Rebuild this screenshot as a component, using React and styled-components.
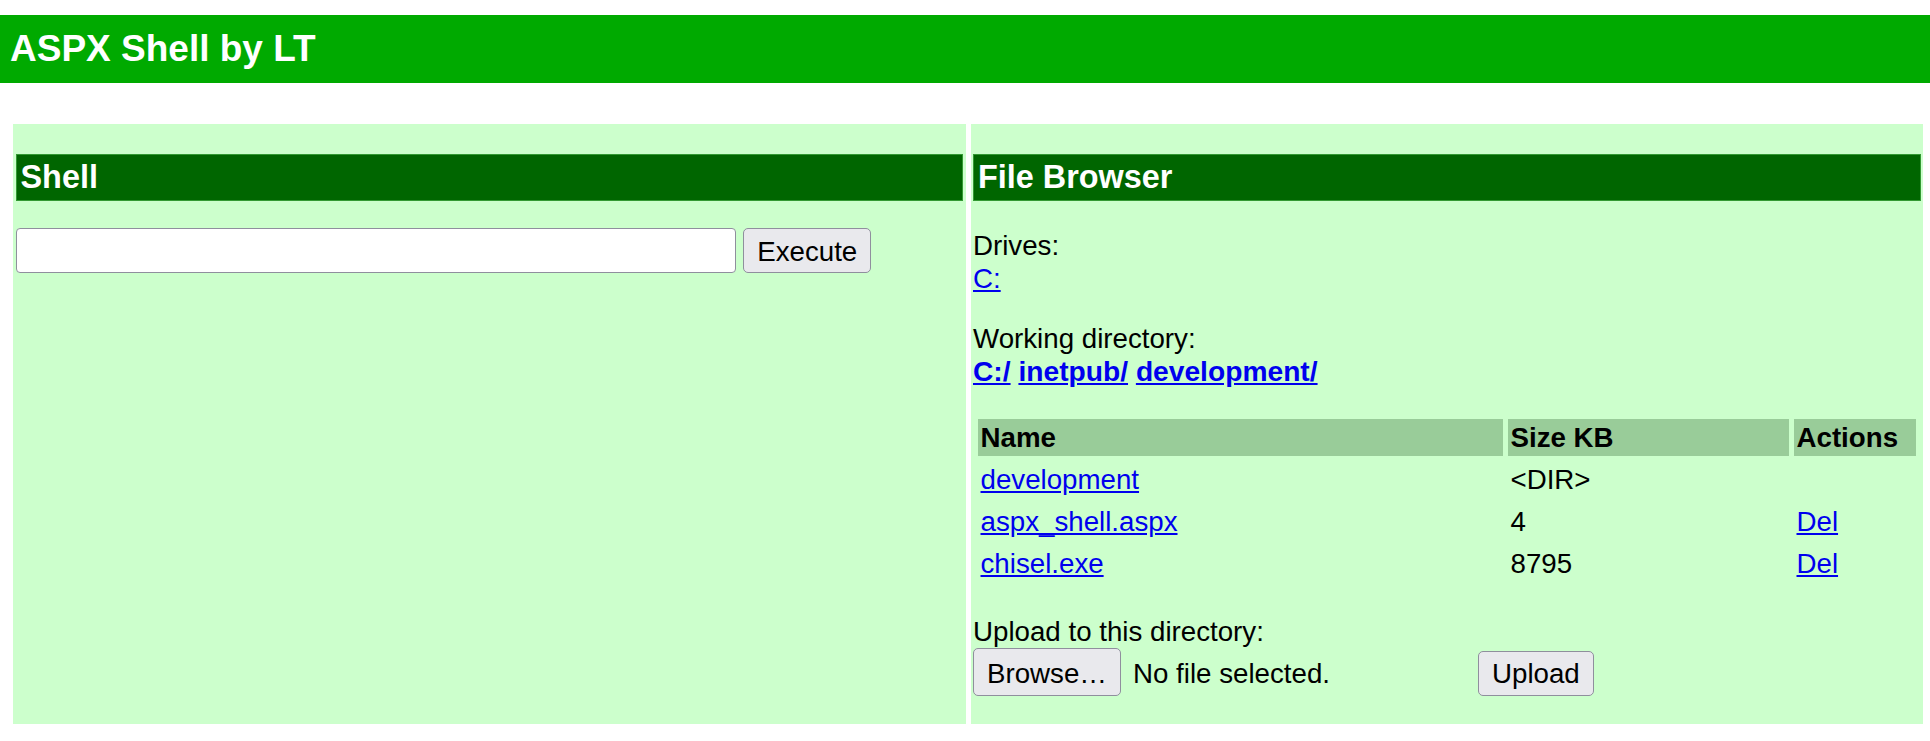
import React from "react";
import styled, { createGlobalStyle } from "styled-components";

const Global = createGlobalStyle`
  body {
    margin: 0;
    background: #ffffff;
    color: #000000;
    font-family: "Liberation Sans", Arial, sans-serif;
    font-size: 27.7px;
    line-height: 33px;
  }
`;

const TitleBar = styled.h1`
  margin: 15px 0 0;
  padding: 13px 10px 12px;
  background: #00aa00;
  color: #ffffff;
  font-size: 37px;
  line-height: 42.5px;
  font-weight: bold;
`;

const Columns = styled.div`
  display: grid;
  grid-template-columns: 1fr 1fr;
  column-gap: 5px;
  margin: 41px 7px 0 13px;
`;

const Panel = styled.div`
  background: #ccffcc;
  padding: 30px 2.5px 0;
`;

const SectionHead = styled.div`
  background: #006600;
  border: 1px solid #339933;
  padding: 4px;
  color: #ffffff;
  font-size: 32.4px;
  line-height: 37px;
  font-weight: bold;
`;

const CommandRow = styled.form`
  display: flex;
  gap: 7.7px;
  margin: 27px 0 0;
`;

const CommandInput = styled.input`
  box-sizing: border-box;
  width: 720px;
  height: 45px;
  background: #ffffff;
  border: 1px solid #8f8f9d;
  border-radius: 4px;
  font: inherit;
  padding: 0 6px;
`;

const Button = styled.button`
  box-sizing: border-box;
  height: ${(p) => p.$h}px;
  padding: ${(p) => p.$pt}px 13px ${(p) => p.$h - p.$pt - 35}px;
  background: #e9e9ed;
  border: 1px solid #8f8f9d;
  border-radius: 5px;
  color: #000000;
  font-family: inherit;
  font-size: 27.7px;
  line-height: 33px;
  cursor: pointer;
`;

const Block = styled.p`
  margin: ${(p) => p.$top}px 0 0;
`;

const Link = styled.a`
  color: #0000ee;
  text-decoration: underline;
  font-weight: ${(p) => (p.$bold ? "bold" : "normal")};
`;

const PathLine = styled.span`
  font-weight: bold;
  font-size: 28.2px;
`;

const FileTable = styled.table`
  width: 100%;
  table-layout: fixed;
  border-spacing: 5px;
  margin-top: 26px;
  font-size: 27.7px;
`;

const Th = styled.th`
  width: ${(p) => p.$w || "auto"};
  background: #99cc99;
  text-align: left;
  padding: 2px 2.5px;
  line-height: 33px;
  font-weight: bold;
`;

const Td = styled.td`
  padding: 2px 2.5px;
  line-height: 33px;
  white-space: nowrap;
`;

const UploadRow = styled.div`
  display: flex;
  align-items: baseline;
  margin-bottom: 28px;
`;

const FilePicker = styled.div`
  display: flex;
  align-items: baseline;
  gap: 12px;
  width: 497px;
`;

const FileName = styled.span`
  white-space: nowrap;
`;

const UploadButton = styled(Button)`
  margin-left: 8px;
`;

const files = [
  { name: "development", size: "<DIR>", del: false },
  { name: "aspx_shell.aspx", size: "4", del: true },
  { name: "chisel.exe", size: "8795", del: true },
];

export default function App() {
  return (
    <>
      <Global />
      <TitleBar>ASPX Shell by LT</TitleBar>
      <Columns>
        <Panel>
          <SectionHead>Shell</SectionHead>
          <CommandRow onSubmit={(e) => e.preventDefault()}>
            <CommandInput type="text" />
            <Button $h={45} $pt={6}>Execute</Button>
          </CommandRow>
        </Panel>
        <Panel>
          <SectionHead>File Browser</SectionHead>
          <Block $top={28}>
            Drives:
            <br />
            <Link href="#">C:</Link>
          </Block>
          <Block $top={27.7}>
            Working directory:
            <br />
            <PathLine>
              <Link href="#" $bold>C:/</Link> <Link href="#" $bold>inetpub/</Link>{" "}
              <Link href="#" $bold>development/</Link>
            </PathLine>
          </Block>
          <FileTable>
            <thead>
              <tr>
                <Th $w="520px">Name</Th>
                <Th $w="276px">Size KB</Th>
                <Th>Actions</Th>
              </tr>
            </thead>
            <tbody>
              {files.map((f) => (
                <tr key={f.name}>
                  <Td>
                    <Link href="#">{f.name}</Link>
                  </Td>
                  <Td>{f.size}</Td>
                  <Td>{f.del && <Link href="#">Del</Link>}</Td>
                </tr>
              ))}
            </tbody>
          </FileTable>
          <Block $top={28}>Upload to this directory:</Block>
          <UploadRow>
            <FilePicker>
              <Button $h={48} $pt={8}>Browse…</Button>
              <FileName>No file selected.</FileName>
            </FilePicker>
            <UploadButton $h={45} $pt={5}>Upload</UploadButton>
          </UploadRow>
        </Panel>
      </Columns>
    </>
  );
}
